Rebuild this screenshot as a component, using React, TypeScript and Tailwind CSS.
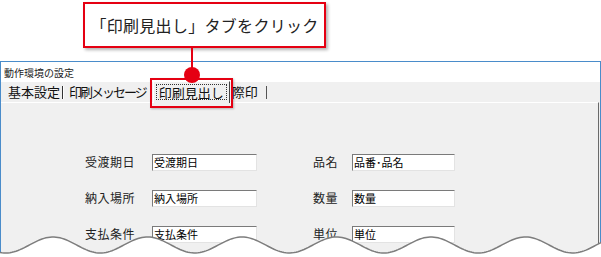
const RED = '#e50012';

// torn bottom edge: sine wave, peaks near y=237, troughs near y=253 (svg top is y=227)
const wavePoints: string[] = [];
for (let x = 0; x <= 602; x += 2) {
  const y = 18 - 8 * Math.cos(((x - 53) / 94.5) * Math.PI * 2);
  wavePoints.push(`${x},${y.toFixed(2)}`);
}
const waveLine = 'M' + wavePoints.join(' L');
const waveFill = waveLine + ' L602,30 L0,30 Z';

function Field({ label, value, labelW, boxW }: { label: string; value: string; labelW: string; boxW: string }) {
  return (
    <div className="flex items-center">
      <span className={`${labelW} text-[12px] tracking-[0.5px] text-[#222]`}>{label}</span>
      <div
        className={`${boxW} h-[17px] bg-white border border-t-[#7a7a7a] border-l-[#7a7a7a] border-b-[#e3e3e3] border-r-[#e3e3e3] pl-[1px] text-[11px] leading-[15px] text-black`}
      >
        {value}
      </div>
    </div>
  );
}

const rows = [
  ['受渡期日', '受渡期日', '品名', '品番･品名'],
  ['納入場所', '納入場所', '数量', '数量'],
  ['支払条件', '支払条件', '単位', '単位'],
];

export default function App() {
  return (
    <div
      className="relative w-[601px] h-[257px] overflow-hidden bg-white flex flex-col"
      style={{ fontFamily: '"Noto Sans CJK JP", "Noto Sans", sans-serif' }}
    >
      {/* callout */}
      <div className="pt-[2px] pl-[83px]">
        <div
          className="w-[243px] h-[46px] bg-white border-2 flex items-center justify-center text-[16px] tracking-[0.3px] text-[#222] shadow-[2px_2px_3px_rgba(0,0,0,0.3)]"
          style={{ borderColor: RED }}
        >
          「印刷見出し」タブをクリック
        </div>
      </div>

      {/* dialog window */}
      <div className="mt-[13px] flex-1 flex flex-col border-t border-l border-r border-[#4a8cca]">
        <div className="h-[20px] bg-white flex items-center pl-[3px] text-[10px] text-[#222]">動作環境の設定</div>

        <div className="flex-1 flex flex-col bg-[#f0f0f0]">
          {/* tab strip */}
          <div className="relative z-10 h-[20px] flex items-center text-[13px] text-[#111]">
            <span className="pl-[7px]">基本設定</span>
            <span className="ml-[2px] w-px h-[13px] bg-[#333]" />
            <span className="w-px h-[13px] bg-white" />
            <span className="ml-[5px] tracking-[-2px]">印刷メッセージ</span>
            <div className="ml-[7px] self-end mb-[-1px] w-[77px] h-[22px] bg-[#f0f0f0] border-l border-t border-white border-r border-r-[#444] flex items-start justify-center pt-[2px]">
              <span className="w-[71px] h-[16px] border border-dotted border-[#333] flex items-center justify-center leading-none">
                印刷見出し
              </span>
            </div>
            <span className="ml-[2px]">際印</span>
            <span className="ml-[8px] w-px h-[13px] bg-[#555]" />
          </div>

          {/* tab panel */}
          <div className="flex-1 border-t border-white border-r border-r-[#6a6a6a] mr-[1px] pt-[50px] pl-[84px] flex flex-col gap-[18px]">
            {rows.map(([l1, v1, l2, v2]) => (
              <div key={l1} className="flex items-center">
                <Field label={l1} value={v1} labelW="w-[67px]" boxW="w-[105px]" />
                <div className="ml-[56px]">
                  <Field label={l2} value={v2} labelW="w-[39px]" boxW="w-[103px]" />
                </div>
              </div>
            ))}
          </div>
        </div>
      </div>

      {/* red frame around the tab, connector and dot */}
      <div
        className="absolute left-[150px] top-[78px] w-[83px] h-[30px] border-2 z-20 shadow-[1px_1px_2px_rgba(0,0,0,0.25)]"
        style={{ borderColor: RED }}
      />
      <div className="absolute left-[191px] top-[48px] w-[2px] h-[27px] z-20" style={{ backgroundColor: RED }} />
      <div className="absolute left-[184px] top-[67px] w-[16px] h-[16px] rounded-full z-30" style={{ backgroundColor: RED }} />

      {/* torn edge */}
      <svg className="absolute left-0 bottom-0 z-40" width="601" height="30" viewBox="0 0 601 30">
        <path d={waveFill} fill="#ffffff" />
        <path d={waveLine} fill="none" stroke="#7d7d7d" strokeWidth="1.5" />
      </svg>
    </div>
  );
}
